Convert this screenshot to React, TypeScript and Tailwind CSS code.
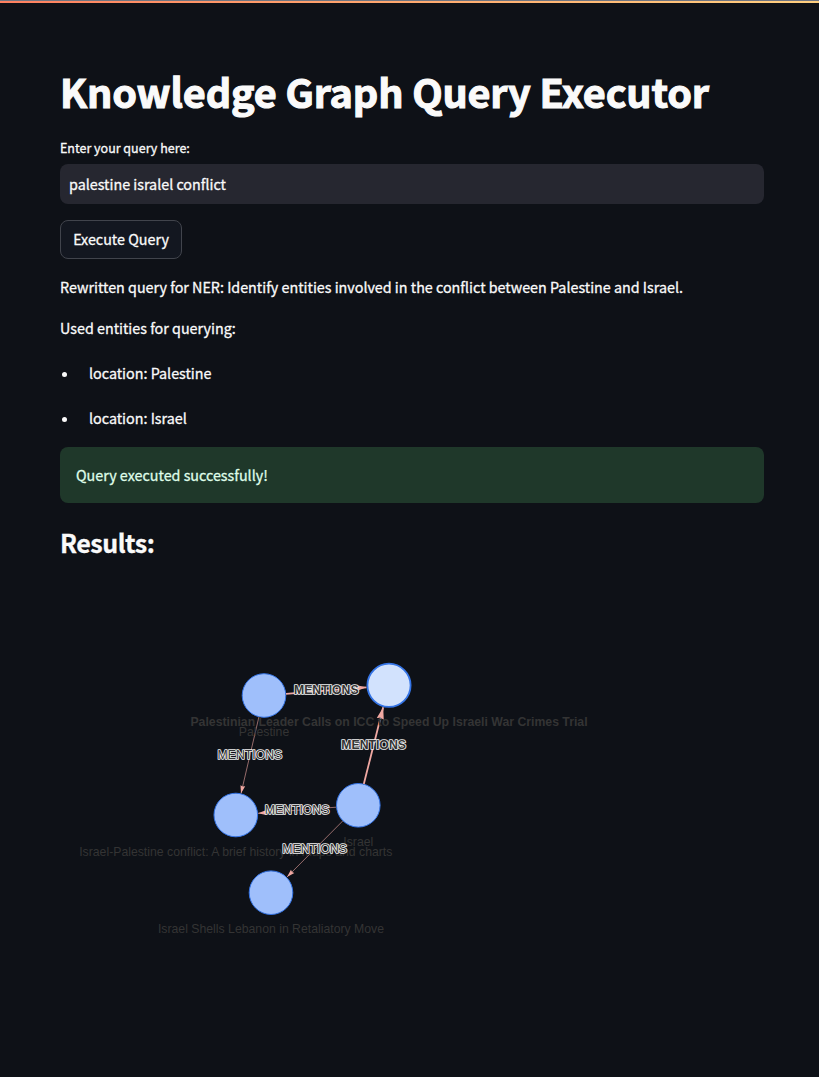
const nodes = [
  { x: 264, y: 695.5, label: 'Palestine' },
  { x: 235.8, y: 815, label: 'Israel-Palestine conflict: A brief history in maps and charts' },
  { x: 358.3, y: 805.3, label: 'Israel' },
  { x: 271, y: 892.7, label: 'Israel Shells Lebanon in Retaliatory Move' },
];

const thin = [
  { x1: 258.9, y1: 717, x2: 241, y2: 793.5, lx: 249.9, ly: 759.3 },
  { x1: 336, y1: 807.2, x2: 258, y2: 813.3, lx: 297, ly: 813.7 },
  { x1: 342.7, y1: 821, x2: 287, y2: 877, lx: 314.7, ly: 852.7 },
];

const thick = [
  { x1: 286, y1: 693.8, x2: 366.5, y2: 687.3, lx: 326.3, ly: 693.7 },
  { x1: 363.8, y1: 784, x2: 383.2, y2: 707.3, lx: 373.6, ly: 749 },
];

function Arrow({ x1, y1, x2, y2, size }: { x1: number; y1: number; x2: number; y2: number; size: number }) {
  const a = (Math.atan2(y2 - y1, x2 - x1) * 180) / Math.PI;
  return (
    <path
      d={`M0 0L${-size} ${size * 0.3}L${-size * 0.9} 0L${-size} ${-size * 0.3}Z`}
      transform={`translate(${x2} ${y2}) rotate(${a})`}
      fill="#f0a8a2"
    />
  );
}

function Graph() {
  return (
    <svg
      className="block h-[496px] w-[704px] overflow-visible"
      viewBox="60 581 704 496"
      fontFamily="Liberation Sans, Arial, sans-serif"
      fontSize="12.25"
      textAnchor="middle"
    >
      {thin.map((e) => (
        <g key={e.lx}>
          <line x1={e.x1} y1={e.y1} x2={e.x2} y2={e.y2} stroke="#f0a8a2" strokeWidth="0.6" />
          <Arrow {...e} size={8} />
        </g>
      ))}
      {nodes.map((n) => (
        <g key={n.label}>
          <circle cx={n.x} cy={n.y} r="21.8" fill="#9fbffb" stroke="#3474e6" strokeWidth="1" />
          <text x={n.x} y={n.y + 40.7} fill="#343434">{n.label}</text>
        </g>
      ))}
      {thin.map((e) => (
        <text key={e.lx} x={e.lx} y={e.ly} fill="#343434" stroke="#f0f0f0" strokeWidth="1.7" strokeLinejoin="round" paintOrder="stroke">
          MENTIONS
        </text>
      ))}
      {thick.map((e) => (
        <g key={e.lx}>
          <line x1={e.x1} y1={e.y1} x2={e.x2} y2={e.y2} stroke="#f0a8a2" strokeWidth="1.8" />
          <Arrow {...e} size={12} />
        </g>
      ))}
      <circle cx="389" cy="685.3" r="21.6" fill="#d2e2fd" stroke="#3474e6" strokeWidth="1.8" />
      <text x="389" y="726" fill="#343434" fontWeight="bold">
        Palestinian Leader Calls on ICC to Speed Up Israeli War Crimes Trial
      </text>
      {thick.map((e) => (
        <text key={e.lx} x={e.lx} y={e.ly} fill="#343434" fontWeight="bold" stroke="#f0f0f0" strokeWidth="1.7" strokeLinejoin="round" paintOrder="stroke">
          MENTIONS
        </text>
      ))}
    </svg>
  );
}

function Entity({ text }: { text: string }) {
  return (
    <li className="flex items-center">
      <span className="mt-0.5 mr-[22px] ml-[2px] h-[5px] w-[5px] rounded-full bg-[#fafafa]" />
      {text}
    </li>
  );
}

export default function App() {
  return (
    <div className="h-[1077px] overflow-hidden bg-[#0e1117] pr-[55px] pl-[60px] font-['Noto_Sans_CJK_SC','Noto_Sans',sans-serif] text-[14.32px] leading-[26px] whitespace-nowrap text-[#fafafa] [-webkit-text-stroke:0.3px_currentColor]">
      <div className="-mr-[55px] -ml-[60px] h-[3px] border-t border-[#6f7480] bg-linear-to-r from-[#ff8060] to-[#ffd080]" />
      <h1 className="pt-[61px] text-[39.6px] leading-[53px] font-bold tracking-[-0.15px] [-webkit-text-stroke:1.1px_currentColor]">
        Knowledge Graph Query Executor
      </h1>
      <div className="mt-5 text-[12.5px] leading-[21px]">Enter your query here:</div>
      <div className="mt-[6px] flex h-10 items-center rounded-lg bg-[#262730] px-[9px]">palestine isralel conflict</div>
      <button className="mt-4 flex h-[39px] w-[122px] items-center justify-center rounded-lg border border-[#41444c] bg-[#131720] pb-0.5">
        Execute Query
      </button>
      <p className="mt-[15px]">Rewritten query for NER: Identify entities involved in the conflict between Palestine and Israel.</p>
      <p className="mt-[15px]">Used entities for querying:</p>
      <ul className="mt-[19px] flex flex-col gap-[19px]">
        <Entity text="location: Palestine" />
        <Entity text="location: Israel" />
      </ul>
      <div className="mt-4 flex h-14 items-center rounded-lg bg-[#1f382a] px-4 text-[#dffde9]">Query executed successfully!</div>
      <h2 className="mt-[22px] text-[25px] leading-[34px] font-bold tracking-[-0.47px]">Results:</h2>
      <div className="mt-[22px]">
        <Graph />
      </div>
    </div>
  );
}
